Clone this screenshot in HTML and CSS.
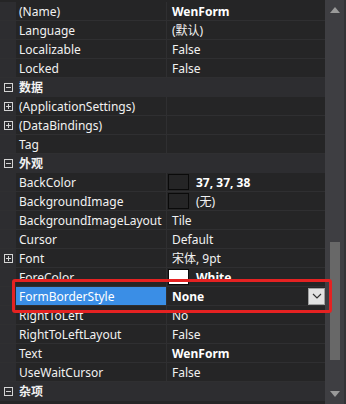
FILE: index.html
```html
<!DOCTYPE html>
<html lang="zh">
<head>
    <meta charset="UTF-8">
    <title>属性</title>
    <link rel="stylesheet" href="styles.css">
</head>
<body>
<div class="panel">
    <div class="grid">
        <div class="row"><div class="gutter"></div><div class="name">(Name)</div><div class="value bold">WenForm</div></div>
        <div class="row"><div class="gutter"></div><div class="name">Language</div><div class="value">(默认)</div></div>
        <div class="row"><div class="gutter"></div><div class="name">Localizable</div><div class="value">False</div></div>
        <div class="row"><div class="gutter"></div><div class="name">Locked</div><div class="value">False</div></div>
        <div class="row category"><div class="gutter"><span class="toggle minus"></span></div><div class="label">数据</div></div>
        <div class="row"><div class="gutter"><span class="toggle plus"></span></div><div class="name">(ApplicationSettings)</div><div class="value"></div></div>
        <div class="row"><div class="gutter"><span class="toggle plus"></span></div><div class="name">(DataBindings)</div><div class="value"></div></div>
        <div class="row"><div class="gutter"></div><div class="name">Tag</div><div class="value"></div></div>
        <div class="row category"><div class="gutter"><span class="toggle minus"></span></div><div class="label">外观</div></div>
        <div class="row"><div class="gutter"></div><div class="name">BackColor</div><div class="value swatched bold"><span class="swatch dark"></span>37, 37, 38</div></div>
        <div class="row"><div class="gutter"></div><div class="name">BackgroundImage</div><div class="value swatched"><span class="swatch dark"></span>(无)</div></div>
        <div class="row"><div class="gutter"></div><div class="name">BackgroundImageLayout</div><div class="value">Tile</div></div>
        <div class="row"><div class="gutter"></div><div class="name">Cursor</div><div class="value">Default</div></div>
        <div class="row"><div class="gutter"><span class="toggle plus"></span></div><div class="name">Font</div><div class="value">宋体, 9pt</div></div>
        <div class="row"><div class="gutter"></div><div class="name">ForeColor</div><div class="value swatched bold"><span class="swatch white"></span>White</div></div>
        <div class="row selected"><div class="gutter"></div><div class="name">FormBorderStyle</div><div class="value bold">None<span class="drop"><svg width="10" height="6" viewBox="0 0 10 6"><path d="M1 1 L5 5 L9 1" fill="none" stroke="#333" stroke-width="1.2"/></svg></span></div></div>
        <div class="row"><div class="gutter"></div><div class="name">RightToLeft</div><div class="value">No</div></div>
        <div class="row"><div class="gutter"></div><div class="name">RightToLeftLayout</div><div class="value">False</div></div>
        <div class="row"><div class="gutter"></div><div class="name">Text</div><div class="value bold">WenForm</div></div>
        <div class="row"><div class="gutter"></div><div class="name">UseWaitCursor</div><div class="value">False</div></div>
        <div class="row category"><div class="gutter"><span class="toggle minus"></span></div><div class="label">杂项</div></div>
    </div>
    <div class="scroll">
        <svg class="arrow" width="10" height="6" viewBox="0 0 10 6"><path d="M0 6 L5 0 L10 6 Z" fill="#9a9a9a"/></svg>
        <div class="track"><div class="thumb"></div></div>
        <svg class="arrow" width="10" height="6" viewBox="0 0 10 6"><path d="M0 0 L5 6 L10 0 Z" fill="#9a9a9a"/></svg>
    </div>
    <div class="mark"></div>
</div>
</body>
</html>
```

FILE: styles.css
```css
body{
    margin: 0;
    background-color: #252526;
    font-family: "Noto Sans", "Noto Sans CJK SC", sans-serif;
    font-size: 12px;
    color: #f1f1f1;
}
.panel{
    position: relative;
    display: flex;
    width: 346px;
    height: 404px;
    overflow: hidden;
}
.grid{
    flex: 1;
    padding-top: 2px;
    display: flex;
    flex-direction: column;
}
.row{
    box-sizing: border-box;
    display: flex;
    height: 19px;
    border-bottom: 1px solid #2f2f31;
    line-height: 17px;
}
.gutter{
    width: 16px;
    flex: none;
    background-color: #2d2d30;
    display: flex;
    align-items: center;
    justify-content: center;
}
.name{
    box-sizing: border-box;
    width: 151px;
    flex: none;
    padding: 1px 0 0 3px;
    white-space: nowrap;
    overflow: hidden;
    border-right: 1px solid #2f2f31;
}
.value{
    flex: 1;
    display: flex;
    align-items: center;
    padding: 1px 0 0 5px;
    white-space: nowrap;
}
.bold{
    font-weight: bold;
    color: #ffffff;
}
.swatched{
    padding-left: 1px;
}
.swatch{
    box-sizing: border-box;
    width: 21px;
    height: 16px;
    margin: -1px 7px 0 0;
    border: 1px solid #0a0a0a;
}
.swatch.dark{
    background-color: #252526;
}
.swatch.white{
    background-color: #ffffff;
}
.category{
    background-color: #2d2d30;
    border-bottom-color: #2d2d30;
}
.category .label{
    padding: 1px 0 0 3px;
    font-weight: bold;
}
.toggle{
    position: relative;
    box-sizing: border-box;
    width: 9px;
    height: 9px;
    border: 1px solid #d4d4d4;
}
.toggle::before{
    content: "";
    position: absolute;
    left: 1px;
    top: 3px;
    width: 5px;
    height: 1px;
    background-color: #d4d4d4;
}
.toggle.plus::after{
    content: "";
    position: absolute;
    left: 3px;
    top: 1px;
    width: 1px;
    height: 5px;
    background-color: #d4d4d4;
}
.selected .name{
    background-color: #3a8ee6;
    color: #ffffff;
}
.drop{
    box-sizing: border-box;
    margin: -1px 0 0 auto;
    width: 17px;
    height: 17px;
    background-color: #e2e2e2;
    border: 1px solid #a0a0a0;
    display: flex;
    align-items: center;
    justify-content: center;
}
.scroll{
    width: 19px;
    flex: none;
    background-color: #3e3e42;
    border-right: 2px solid #333336;
    display: flex;
    flex-direction: column;
    align-items: center;
}
.arrow{
    margin: 7px 0;
}
.track{
    flex: 1;
    width: 100%;
    display: flex;
    justify-content: center;
}
.thumb{
    width: 10px;
    height: 118px;
    margin-top: 222px;
    background-color: #686868;
}
.mark{
    position: absolute;
    left: 12px;
    top: 279px;
    width: 314px;
    height: 28px;
    border: 3px solid #e52222;
    border-radius: 3px;
}
```
